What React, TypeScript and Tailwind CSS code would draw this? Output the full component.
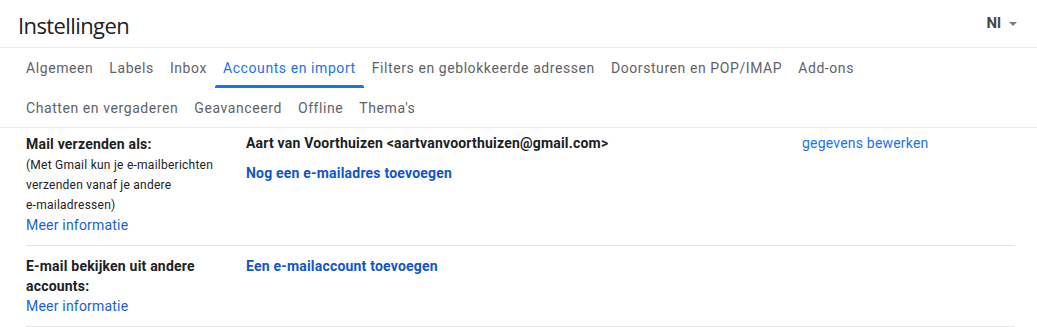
import React from 'react'

const tabsTop = ['Algemeen', 'Labels', 'Inbox', 'Accounts en import', 'Filters en geblokkeerde adressen', 'Doorsturen en POP/IMAP', 'Add-ons']
const tabsBottom = ['Chatten en vergaderen', 'Geavanceerd', 'Offline', "Thema's"]

function Tab({ label, active }: { label: string; active?: boolean }) {
  return (
    <div
      className={`relative px-2 h-full flex items-center text-[14px] tracking-[0.58px] ${
        active ? 'text-[#1a73e8]' : 'text-[#5f6368]'
      }`}
    >
      {label}
      {active && <div className="absolute left-0 right-0 bottom-[1px] h-[3px] bg-[#1a73e8] rounded-t-[2px]" />}
    </div>
  )
}

export default function App() {
  return (
    <div className="w-[1037px] h-[327px] bg-white overflow-hidden text-[#202124]" style={{ fontFamily: 'Roboto, "Liberation Sans", sans-serif' }}>
      {/* kop */}
      <div className="flex items-center justify-between h-[48px] pl-[18px] pr-[20px] border-b border-[#e8eaed]">
        <h1 className="text-[22px] text-[#202124] font-['Open_Sans',sans-serif] tracking-[-0.6px] leading-none pt-[2px]">Instellingen</h1>
        <div className="flex items-center gap-[8px] text-[#444746]">
          <span className="text-[15px] font-bold">Nl</span>
          <svg width="8" height="4" viewBox="0 0 8 4"><path d="M0 0h8L4 4z" fill="#7a7d80" /></svg>
        </div>
      </div>

      {/* tabs */}
      <div className="border-b border-[#e8eaed]">
        <div className="flex pl-[18px] h-[41px]">
          {tabsTop.map((t) => (
            <Tab key={t} label={t} active={t === 'Accounts en import'} />
          ))}
        </div>
        <div className="flex pl-[18px] h-[38px]">
          {tabsBottom.map((t) => (
            <Tab key={t} label={t} />
          ))}
        </div>
      </div>

      {/* inhoud */}
      <div className="ml-[26px] mr-[22px] text-[14px] leading-[20px] tracking-[0.2px]">
        <div className="flex pt-[5px] pb-[10px] border-b border-[#e5e5e5]">
          <div className="w-[220px]">
            <div className="font-bold leading-[22px]">Mail verzenden als:</div>
            <div className="text-[12px] leading-[20px] tracking-[0.25px]">
              (Met Gmail kun je e-mailberichten
              <br />
              verzenden vanaf je andere
              <br />
              e-mailadressen)
            </div>
            <div className="text-[#1a5fd6]">Meer informatie</div>
          </div>
          <div className="w-[556px]">
            <div className="font-bold">Aart van Voorthuizen &lt;aartvanvoorthuizen@gmail.com&gt;</div>
            <div className="mt-[10px] font-bold text-[#1155cc]">Nog een e-mailadres toevoegen</div>
          </div>
          <div className="text-[#1a73e8]">gegevens bewerken</div>
        </div>

        <div className="flex pt-[10px] pb-[10px] border-b border-[#e5e5e5]">
          <div className="w-[220px]">
            <div className="font-bold">
              E-mail bekijken uit andere
              <br />
              accounts:
            </div>
            <div className="text-[#1a5fd6]">Meer informatie</div>
          </div>
          <div className="font-bold text-[#1155cc]">Een e-mailaccount toevoegen</div>
        </div>
      </div>
    </div>
  )
}
